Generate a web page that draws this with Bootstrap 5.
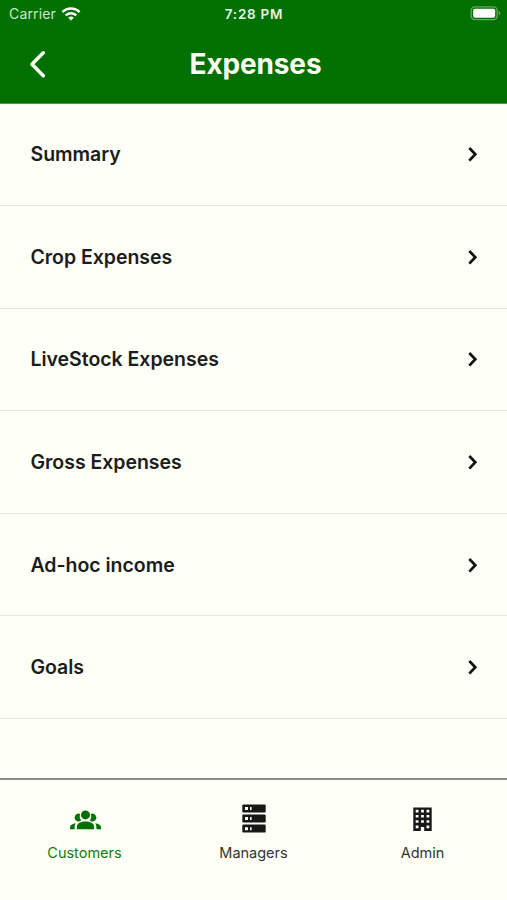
<!DOCTYPE html>
<html lang="en">
<head>
<meta charset="utf-8">
<meta name="viewport" content="width=device-width, initial-scale=1">
<title>Expenses</title>
<link rel="stylesheet" href="https://cdn.jsdelivr.net/npm/bootstrap@5.3.0/dist/css/bootstrap.min.css">
<style>
body{font-family:Inter,"Liberation Sans",sans-serif;background:#fefff6;color:#1b1c1b;height:900px;overflow:hidden}
svg{display:block;flex:none}
.app-head{height:103.5px;background:#007000;color:#fcfff2;border-bottom:1px solid #4f9a49}
.status{height:27px;padding:0 6px 0 9px;font-size:14px;line-height:27px}
.status .carrier{color:#cfe6cb;letter-spacing:.15px;margin-right:5px}
.status .clock{font-size:13.5px;font-weight:600;letter-spacing:.75px;color:#e6f5e2;padding-top:1px;margin-right:2px}
.titlebar{height:74px;padding:0 25px 0 29px}
.titlebar h1{font-size:28px;font-weight:700;line-height:34px;letter-spacing:-.15px}
.side{width:60px}
.menu-row{height:102.6px;padding:0 28px 0 30.5px;border:0;background:transparent;color:#1b1c1b;font-size:19.5px;font-weight:600;line-height:26px;letter-spacing:-.03px}
.list-group-flush>.menu-row,.list-group-flush>.menu-row:last-child{border-bottom:1px solid #e5e6e1}
.tabs{height:122px;border-top:2px solid #8b8c88;padding-top:22px}
.tabs a{color:#333432;font-size:14.5px;line-height:20px}
.tabs a.current{color:#117d11}
.tab-icon{height:32px;margin-bottom:9px}
</style>
</head>
<body class="d-flex flex-column">
<header class="app-head flex-shrink-0">
  <div class="status d-flex align-items-center">
    <div class="col d-flex align-items-center">
      <span class="carrier">Carrier</span>
      <svg width="20" height="14" viewBox="0 0 20 14" fill="none" stroke="#fff" stroke-width="2.5"><path d="M1.400 5.100C6.200.3 13.800.3 18.600 5.100M4.700 8.400a7.600 7.600 0 0 1 10.600 0"/><path d="M10 13.600 7.200 10.800a4 4 0 0 1 5.600 0z" fill="#fff" stroke="none"/></svg>
    </div>
    <span class="clock">7:28 PM</span>
    <div class="col d-flex justify-content-end">
      <svg width="31" height="15" viewBox="0 0 31 15"><rect x="1.200" y=".8" width="26" height="12.800" rx="3.600" fill="none" stroke="#67a963" stroke-width="1.300"/><rect x="3.200" y="2.700" width="22" height="9" rx="1.800" fill="#fff"/><path d="M28.800 5c2 .7 2 3.700 0 4.400z" fill="#67a963"/></svg>
    </div>
  </div>
  <div class="titlebar d-flex align-items-center justify-content-between">
    <div class="side"><svg width="18" height="28" viewBox="0 0 18 28" fill="none" stroke="#fcfff2" stroke-width="3.500" stroke-linecap="round" stroke-linejoin="round"><path d="M14.300 2.800 3 14.300l11.300 11.500"/></svg></div>
    <h1 class="m-0">Expenses</h1>
    <div class="side"></div>
  </div>
</header>
<main class="flex-grow-1">
  <div class="list-group list-group-flush">
    <a href="#" class="list-group-item menu-row d-flex align-items-center justify-content-between">Summary<svg width="12" height="16" viewBox="0 0 12 16" fill="none" stroke="#111" stroke-width="2.700"><path d="m2.300 2 6 6.300-6 6.300"/></svg></a>
    <a href="#" class="list-group-item menu-row d-flex align-items-center justify-content-between">Crop Expenses<svg width="12" height="16" viewBox="0 0 12 16" fill="none" stroke="#111" stroke-width="2.700"><path d="m2.300 2 6 6.300-6 6.300"/></svg></a>
    <a href="#" class="list-group-item menu-row d-flex align-items-center justify-content-between">LiveStock Expenses<svg width="12" height="16" viewBox="0 0 12 16" fill="none" stroke="#111" stroke-width="2.700"><path d="m2.300 2 6 6.300-6 6.300"/></svg></a>
    <a href="#" class="list-group-item menu-row d-flex align-items-center justify-content-between">Gross Expenses<svg width="12" height="16" viewBox="0 0 12 16" fill="none" stroke="#111" stroke-width="2.700"><path d="m2.300 2 6 6.300-6 6.300"/></svg></a>
    <a href="#" class="list-group-item menu-row d-flex align-items-center justify-content-between">Ad-hoc income<svg width="12" height="16" viewBox="0 0 12 16" fill="none" stroke="#111" stroke-width="2.700"><path d="m2.300 2 6 6.300-6 6.300"/></svg></a>
    <a href="#" class="list-group-item menu-row d-flex align-items-center justify-content-between">Goals<svg width="12" height="16" viewBox="0 0 12 16" fill="none" stroke="#111" stroke-width="2.700"><path d="m2.300 2 6 6.300-6 6.300"/></svg></a>
  </div>
</main>
<nav class="tabs d-flex flex-shrink-0">
  <a href="#" class="current col d-flex flex-column align-items-center text-decoration-none">
    <span class="tab-icon d-flex align-items-center pt-1"><svg width="32" height="20" viewBox="0 0 32 20" fill="#007000"><circle cx="16.500" cy="4.900" r="4.500"/><path d="M7.900 19.300v-2.500c0-3.500 4-5.300 8.600-5.300s8.600 1.800 8.600 5.300v2.500z"/><path d="M11.200 3.900a6.500 6.500 0 0 0 1 6.500A3.900 3.900 0 1 1 11.200 3.900zM21.800 3.900a6.500 6.500 0 0 1-1 6.500A3.900 3.900 0 1 0 21.800 3.900zM1 19.300v-1.900c0-2.200 2.300-3.700 5.900-4.100-.9 1-1.300 2.300-1.300 3.900v2.100zM32 19.300v-1.900c0-2.200-2.300-3.700-5.900-4.100.9 1 1.300 2.300 1.300 3.900v2.100z"/></svg></span>
    <span class="tab-label">Customers</span>
  </a>
  <a href="#" class="col d-flex flex-column align-items-center text-decoration-none">
    <span class="tab-icon d-flex align-items-center"><svg width="24" height="29" viewBox="0 0 24 29"><g fill="#171817"><rect x=".3" y=".4" width="23.400" height="8" rx="1.200"/><rect x=".3" y="10.500" width="23.400" height="8" rx="1.200"/><rect x=".3" y="20.600" width="23.400" height="8" rx="1.200"/></g><path fill="#fefff6" d="M3 3h3v3H3zM8 3h1.600v3H8zM3 13.100h3v3H3zM8 13.100h1.600v3H8zM3 23.200h3v3H3zM8 23.200h1.600v3H8z"/></svg></span>
    <span class="tab-label">Managers</span>
  </a>
  <a href="#" class="col d-flex flex-column align-items-center text-decoration-none">
    <span class="tab-icon d-flex align-items-center pt-1"><svg width="19" height="26" viewBox="0 0 19 26"><path fill="#171817" fill-rule="evenodd" d="M.3.500h18.400v23.500h-7.500v-4H7.800v4H.3zM2.700 2.800v2.600h2.800V2.800zM8.100 2.800v2.600h2.800V2.800zM13.500 2.800v2.600h2.800V2.800zM2.700 8v2.600h2.800V8zM8.100 8v2.600h2.800V8zM13.500 8v2.600h2.800V8zM2.700 13.200v2.600h2.800v-2.600zM8.100 13.200v2.600h2.800v-2.600zM13.500 13.200v2.600h2.800v-2.600zM2.700 18.600v2.600h2.800v-2.600zM13.500 18.600v2.600h2.800v-2.600z"/></svg></span>
    <span class="tab-label">Admin</span>
  </a>
</nav>
<script src="https://cdn.jsdelivr.net/npm/bootstrap@5.3.0/dist/js/bootstrap.bundle.min.js"></script>
</body>
</html>
